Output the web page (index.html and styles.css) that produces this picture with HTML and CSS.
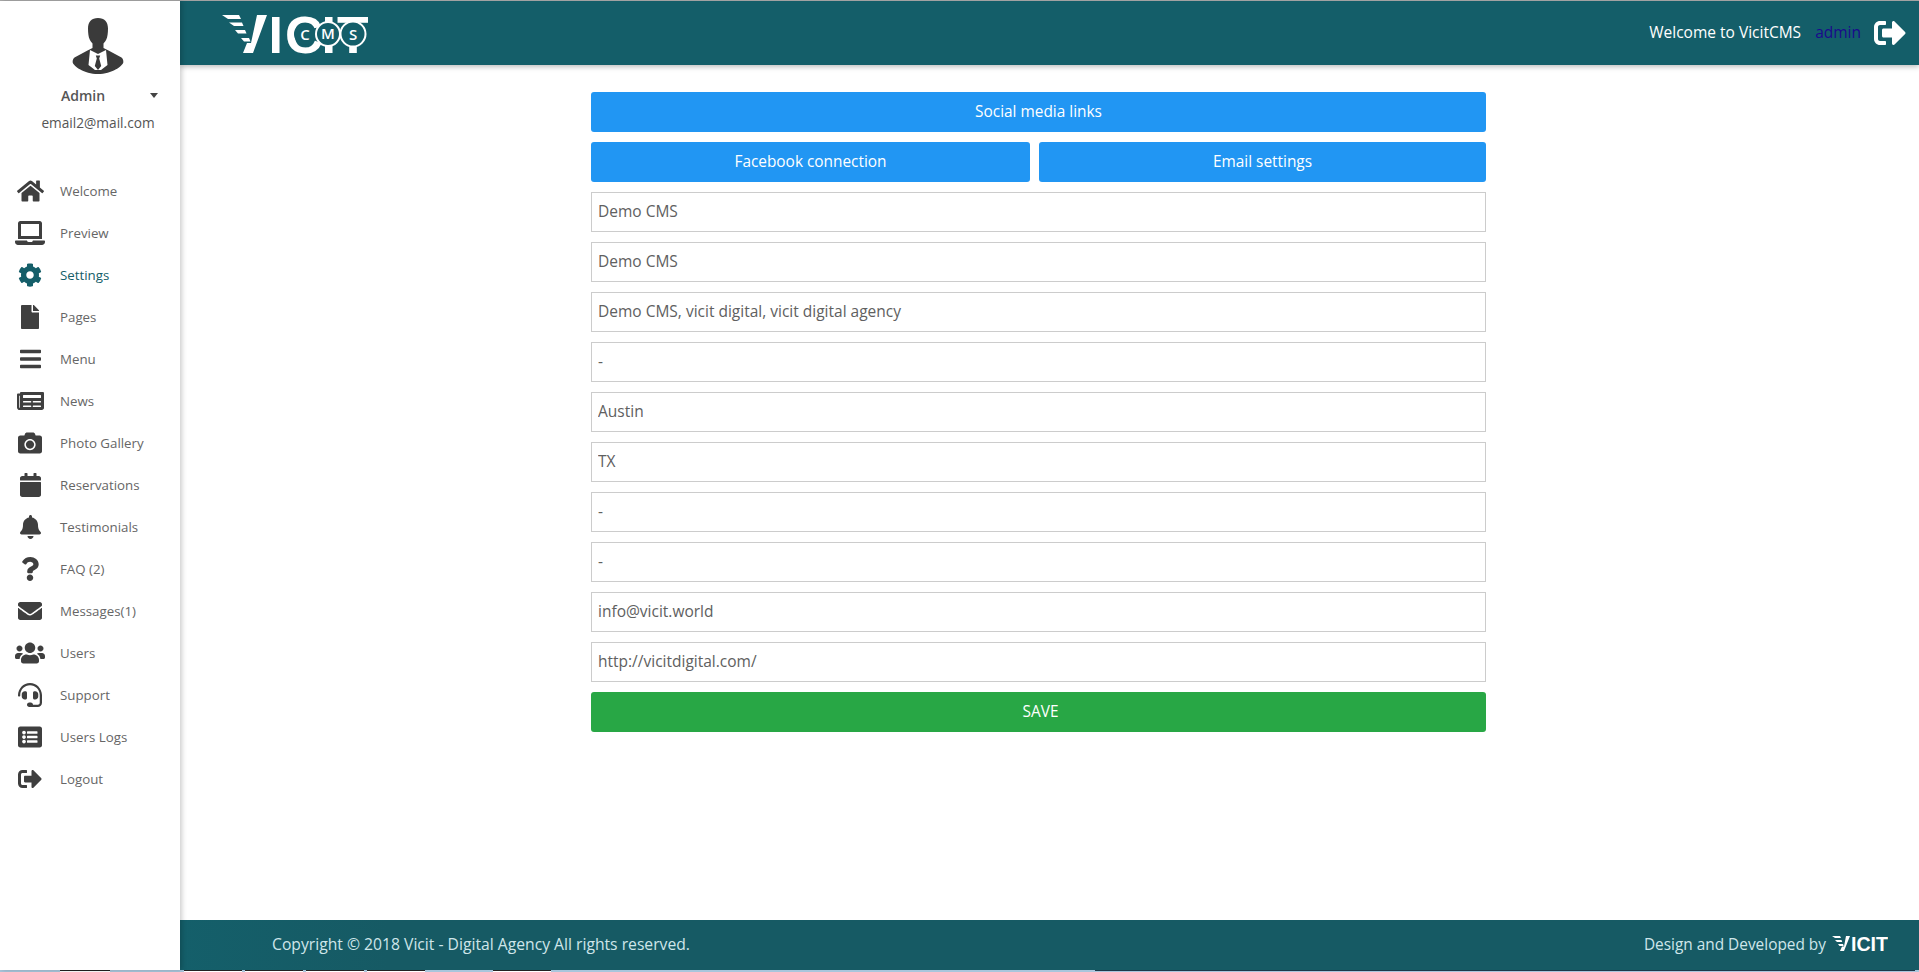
FILE: index.html
```html
<!DOCTYPE html>
<html lang="en">
<head>
  <meta charset="UTF-8">
  <title>VicitCMS - Settings</title>
  <link rel="stylesheet" href="styles.css">
</head>
<body>
  <div class="page">
    <aside class="sidebar">
      <div class="profile">
        <svg class="avatar" viewBox="0 0 52 56">
          <path d="M26 0c-6.500 0-10 4-10 10.500 0 4.500.6 8.500 1.500 10.500.6 1.600 2 3.500 3 4.500v4.500l-5 2.500-13 7c-1.500 1-2 3-1.800 5C1.500 48 12 56 26 56s24.500-8 25.300-11.500c.2-2-.3-4-1.800-5l-13-7-5-2.500v-4.500c1-1 2.400-2.900 3-4.500.9-2 1.500-6 1.500-10.500C36 4 32.500 0 26 0z"/>
          <path class="avatar-shirt" d="M18 32l8 4 8-4 1.500 15-6.500 5h-6l-6.500-5z"/>
          <path d="M23.800 37.500h4.400l-1 3 2 7.500-3.200 4-3.200-4 2-7.500z"/>
        </svg>
        <div class="profile-name">
          <span>Admin</span>
          <i class="caret"></i>
        </div>
        <div class="profile-mail">email2@mail.com</div>
      </div>
      <nav class="side-nav">
        <a class="nav-item" href="#">
          <span class="nav-icon"><svg width="27" height="24" viewBox="0 0 576 512"><path d="M280.37 148.26L96 300.11V464a16 16 0 0 0 16 16l112.06-.29a16 16 0 0 0 15.92-16V368a16 16 0 0 1 16-16h64a16 16 0 0 1 16 16v95.64a16 16 0 0 0 16 16.05L464 480a16 16 0 0 0 16-16V300L295.67 148.26a12.19 12.19 0 0 0-15.3 0zM571.6 251.47L488 182.56V44.05a12 12 0 0 0-12-12h-56a12 12 0 0 0-12 12v72.61L318.47 43a48 48 0 0 0-61 0L4.34 251.47a12 12 0 0 0-1.6 16.9l25.5 31A12 12 0 0 0 45.15 301l235.22-193.74a12.19 12.19 0 0 1 15.3 0L530.9 301a12 12 0 0 0 16.9-1.6l25.5-31a12 12 0 0 0-1.7-16.93z"/></svg></span>
          Welcome
        </a>
        <a class="nav-item" href="#">
          <span class="nav-icon"><svg width="30" height="24" viewBox="0 0 640 512"><path d="M624 416H381.54c-.74 19.81-14.71 32-32.74 32H288c-18.69 0-33.02-17.47-32.77-32H16c-8.8 0-16 7.2-16 16v16c0 35.2 28.8 64 64 64h512c35.2 0 64-28.8 64-64v-16c0-8.8-7.2-16-16-16zM576 48c0-26.400-21.600-48-48-48H112C85.600 0 64 21.600 64 48v336h512V48zm-64 272H128V64h384v256z"/></svg></span>
          Preview
        </a>
        <a class="nav-item active" href="#">
          <span class="nav-icon"><svg width="24" height="24" viewBox="0 0 512 512"><path d="M487.4 315.7l-42.6-24.6c4.3-23.2 4.3-47 0-70.2l42.6-24.6c4.9-2.8 7.1-8.6 5.5-14-11.1-35.6-30-67.8-54.7-94.6-3.8-4.1-10-5.1-14.8-2.3L380.8 110c-17.9-15.4-38.5-27.3-60.8-35.1V25.8c0-5.6-3.9-10.5-9.4-11.7-36.7-8.2-74.3-7.8-109.2 0-5.5 1.2-9.4 6.1-9.4 11.7V75c-22.2 7.9-42.8 19.8-60.8 35.1L88.7 85.5c-4.9-2.8-11-1.9-14.8 2.3-24.7 26.7-43.6 58.9-54.7 94.6-1.7 5.4.6 11.2 5.5 14L67.3 221c-4.3 23.2-4.3 47 0 70.2l-42.6 24.6c-4.9 2.8-7.1 8.6-5.5 14 11.1 35.6 30 67.8 54.7 94.6 3.8 4.1 10 5.1 14.8 2.3l42.6-24.6c17.9 15.4 38.5 27.3 60.8 35.1v49.2c0 5.6 3.9 10.5 9.4 11.7 36.7 8.2 74.3 7.8 109.2 0 5.5-1.2 9.4-6.1 9.4-11.7v-49.2c22.2-7.9 42.8-19.8 60.8-35.1l42.6 24.6c4.9 2.8 11 1.9 14.8-2.3 24.7-26.7 43.6-58.9 54.7-94.6 1.5-5.5-.7-11.3-5.6-14.1zM256 336c-44.1 0-80-35.9-80-80s35.9-80 80-80 80 35.9 80 80-35.9 80-80 80z"/></svg></span>
          Settings
        </a>
        <a class="nav-item" href="#">
          <span class="nav-icon"><svg width="18" height="24" viewBox="0 0 384 512"><path d="M224 136V0H24C10.700 0 0 10.700 0 24v464c0 13.300 10.700 24 24 24h336c13.300 0 24-10.700 24-24V160H248c-13.200 0-24-10.800-24-24zm160-14.100v6.100H256V0h6.100c6.400 0 12.500 2.500 17 7l97.900 98c4.500 4.500 7 10.600 7 16.900z"/></svg></span>
          Pages
        </a>
        <a class="nav-item" href="#">
          <span class="nav-icon"><svg width="21" height="24" viewBox="0 0 448 512"><path d="M16 132h416c8.837 0 16-7.163 16-16V76c0-8.837-7.163-16-16-16H16C7.163 60 0 67.163 0 76v40c0 8.837 7.163 16 16 16zm0 160h416c8.837 0 16-7.163 16-16v-40c0-8.837-7.163-16-16-16H16c-8.837 0-16 7.163-16 16v40c0 8.837 7.163 16 16 16zm0 160h416c8.837 0 16-7.163 16-16v-40c0-8.837-7.163-16-16-16H16c-8.837 0-16 7.163-16 16v40c0 8.837 7.163 16 16 16z"/></svg></span>
          Menu
        </a>
        <a class="nav-item" href="#">
          <span class="nav-icon"><svg width="27" height="24" viewBox="0 0 576 512"><path d="M552 64H88c-13.255 0-24 10.745-24 24v8H24c-13.255 0-24 10.745-24 24v272c0 30.928 25.072 56 56 56h472c26.510 0 48-21.490 48-48V88c0-13.255-10.745-24-24-24zM56 400a8 8 0 0 1-8-8V144h16v248a8 8 0 0 1-8 8zm236-16H140c-6.627 0-12-5.373-12-12v-8c0-6.627 5.373-12 12-12h152c6.627 0 12 5.373 12 12v8c0 6.627-5.373 12-12 12zm208 0H348c-6.627 0-12-5.373-12-12v-8c0-6.627 5.373-12 12-12h152c6.627 0 12 5.373 12 12v8c0 6.627-5.373 12-12 12zm-208-96H140c-6.627 0-12-5.373-12-12v-8c0-6.627 5.373-12 12-12h152c6.627 0 12 5.373 12 12v8c0 6.627-5.373 12-12 12zm208 0H348c-6.627 0-12-5.373-12-12v-8c0-6.627 5.373-12 12-12h152c6.627 0 12 5.373 12 12v8c0 6.627-5.373 12-12 12zm0-96H140c-6.627 0-12-5.373-12-12v-40c0-6.627 5.373-12 12-12h360c6.627 0 12 5.373 12 12v40c0 6.627-5.373 12-12 12z"/></svg></span>
          News
        </a>
        <a class="nav-item" href="#">
          <span class="nav-icon"><svg width="24" height="24" viewBox="0 0 512 512"><path d="M512 144v288c0 26.500-21.500 48-48 48H48c-26.500 0-48-21.500-48-48V144c0-26.500 21.500-48 48-48h88l12.300-32.900c7-18.700 24.900-31.100 44.900-31.100h125.500c20 0 37.900 12.400 44.900 31.100L376 96h88c26.500 0 48 21.500 48 48zM376 288c0-66.200-53.800-120-120-120s-120 53.800-120 120 53.800 120 120 120 120-53.800 120-120zm-32 0c0 48.500-39.500 88-88 88s-88-39.500-88-88 39.500-88 88-88 88 39.500 88 88z"/></svg></span>
          Photo Gallery
        </a>
        <a class="nav-item" href="#">
          <span class="nav-icon"><svg width="21" height="24" viewBox="0 0 448 512"><path d="M12 192h424c6.600 0 12 5.400 12 12v260c0 26.500-21.500 48-48 48H48c-26.500 0-48-21.500-48-48V204c0-6.600 5.400-12 12-12zm436-44v-36c0-26.500-21.500-48-48-48h-48V12c0-6.600-5.400-12-12-12h-40c-6.600 0-12 5.400-12 12v52H160V12c0-6.600-5.400-12-12-12h-40c-6.600 0-12 5.400-12 12v52H48C21.500 64 0 85.500 0 112v36c0 6.600 5.400 12 12 12h424c6.600 0 12-5.400 12-12z"/></svg></span>
          Reservations
        </a>
        <a class="nav-item" href="#">
          <span class="nav-icon"><svg width="21" height="24" viewBox="0 0 448 512"><path d="M224 512c35.320 0 63.970-28.650 63.970-64H160.030c0 35.350 28.650 64 63.970 64zm215.390-149.710c-19.320-20.760-55.470-51.990-55.470-154.290 0-77.700-54.480-139.900-127.940-155.160V32c0-17.670-14.320-32-31.980-32s-31.980 14.330-31.980 32v20.840C118.560 68.100 64.080 130.300 64.080 208c0 102.300-36.150 133.530-55.470 154.290-6 6.450-8.660 14.160-8.610 21.710.11 16.400 12.980 32 32.100 32h383.800c19.120 0 32-15.600 32.100-32 .05-7.550-2.610-15.270-8.610-21.710z"/></svg></span>
          Testimonials
        </a>
        <a class="nav-item" href="#">
          <span class="nav-icon"><svg width="18" height="24" viewBox="0 0 384 512"><path d="M202.021 0C122.202 0 70.503 32.703 29.914 91.026c-7.363 10.580-5.093 25.086 5.178 32.874l43.138 32.709c10.373 7.865 25.132 6.026 33.253-4.148 25.049-31.381 43.630-49.449 82.757-49.449 30.764 0 68.816 19.799 68.816 49.631 0 22.552-18.617 34.134-48.993 51.164-35.423 19.860-82.299 44.576-82.299 106.405V320c0 13.255 10.745 24 24 24h72.471c13.255 0 24-10.745 24-24v-5.773c0-42.860 125.268-44.645 125.268-160.627C377.504 66.256 286.902 0 202.021 0zM192 373.459c-38.196 0-69.271 31.075-69.271 69.271 0 38.195 31.075 69.270 69.271 69.270s69.271-31.075 69.271-69.271-31.075-69.270-69.271-69.270z"/></svg></span>
          FAQ (2)
        </a>
        <a class="nav-item" href="#">
          <span class="nav-icon"><svg width="24" height="24" viewBox="0 0 512 512"><path d="M502.300 190.800c3.900-3.100 9.700-.2 9.700 4.700V400c0 26.500-21.500 48-48 48H48c-26.500 0-48-21.500-48-48V195.600c0-5 5.700-7.800 9.700-4.700 22.400 17.400 52.100 39.500 154.100 113.600 21.100 15.400 56.700 47.800 92.200 47.600 35.700.3 72-32.800 92.300-47.600 102-74.100 131.600-96.300 154-113.700zM256 320c23.200.4 56.600-29.200 73.400-41.400 132.700-96.300 142.800-104.700 173.400-128.700 5.800-4.500 9.200-11.500 9.200-18.900v-19c0-26.500-21.500-48-48-48H48C21.500 64 0 85.500 0 112v19c0 7.400 3.400 14.300 9.200 18.900 30.600 23.900 40.700 32.400 173.400 128.700 16.800 12.200 50.200 41.800 73.400 41.400z"/></svg></span>
          Messages(1)
        </a>
        <a class="nav-item" href="#">
          <span class="nav-icon"><svg width="30" height="24" viewBox="0 0 640 512"><path d="M96 224c35.300 0 64-28.700 64-64s-28.700-64-64-64-64 28.700-64 64 28.700 64 64 64zm448 0c35.300 0 64-28.700 64-64s-28.700-64-64-64-64 28.700-64 64 28.700 64 64 64zm32 32h-64c-17.600 0-33.500 7.100-45.100 18.600 40.300 22.100 68.900 62 75.100 109.400h66c17.700 0 32-14.300 32-32v-32c0-35.300-28.700-64-64-64zm-256 0c61.900 0 112-50.100 112-112S381.900 32 320 32 208 82.100 208 144s50.100 112 112 112zm76.800 32h-8.300c-20.800 10-43.900 16-68.500 16s-47.600-6-68.500-16h-8.300C179.600 288 128 339.600 128 403.200V432c0 26.500 21.500 48 48 48h288c26.500 0 48-21.500 48-48v-28.800c0-63.600-51.600-115.200-115.200-115.200zm-223.700-13.400C161.500 263.100 145.600 256 128 256H64c-35.300 0-64 28.700-64 64v32c0 17.700 14.300 32 32 32h65.900c6.300-47.400 34.900-87.300 75.200-109.400z"/></svg></span>
          Users
        </a>
        <a class="nav-item" href="#">
          <span class="nav-icon"><svg width="24" height="24" viewBox="0 0 512 512"><path d="M192 208c0-17.670-14.330-32-32-32h-16c-35.350 0-64 28.650-64 64v48c0 35.350 28.650 64 64 64h16c17.670 0 32-14.330 32-32V208zm176 144c35.350 0 64-28.650 64-64v-48c0-35.350-28.650-64-64-64h-16c-17.670 0-32 14.330-32 32v112c0 17.670 14.330 32 32 32h16zM256 0C113.180 0 4.580 118.830 0 256v16c0 8.840 7.160 16 16 16h16c8.840 0 16-7.160 16-16v-16c0-114.690 93.310-208 208-208s208 93.310 208 208h-.12c.08 2.430.12 165.720.12 165.720 0 23.350-18.930 42.280-42.280 42.280H320c0-26.510-21.490-48-48-48h-32c-26.510 0-48 21.490-48 48s21.490 48 48 48h181.720c49.860 0 90.280-40.420 90.280-90.280V256C507.420 118.830 398.820 0 256 0z"/></svg></span>
          Support
        </a>
        <a class="nav-item" href="#">
          <span class="nav-icon"><svg width="24" height="24" viewBox="0 0 512 512"><path d="M464 480H48c-26.510 0-48-21.490-48-48V80c0-26.510 21.490-48 48-48h416c26.510 0 48 21.490 48 48v352c0 26.510-21.490 48-48 48zM128 120c-22.091 0-40 17.909-40 40s17.909 40 40 40 40-17.909 40-40-17.909-40-40-40zm0 96c-22.091 0-40 17.909-40 40s17.909 40 40 40 40-17.909 40-40-17.909-40-40-40zm0 96c-22.091 0-40 17.909-40 40s17.909 40 40 40 40-17.909 40-40-17.909-40-40-40zm288-136v-32c0-6.627-5.373-12-12-12H204c-6.627 0-12 5.373-12 12v32c0 6.627 5.373 12 12 12h200c6.627 0 12-5.373 12-12zm0 96v-32c0-6.627-5.373-12-12-12H204c-6.627 0-12 5.373-12 12v32c0 6.627 5.373 12 12 12h200c6.627 0 12-5.373 12-12zm0 96v-32c0-6.627-5.373-12-12-12H204c-6.627 0-12 5.373-12 12v32c0 6.627 5.373 12 12 12h200c6.627 0 12-5.373 12-12z"/></svg></span>
          Users Logs
        </a>
        <a class="nav-item" href="#">
          <span class="nav-icon"><svg width="24" height="24" viewBox="0 0 512 512"><path d="M497 273L329 441c-15 15-41 4.500-41-17v-96H152c-13.300 0-24-10.700-24-24v-96c0-13.300 10.700-24 24-24h136V88c0-21.400 25.900-32 41-17l168 168c9.300 9.400 9.300 24.600 0 34zM192 436v-40c0-6.600-5.400-12-12-12H96c-17.700 0-32-14.300-32-32V160c0-17.700 14.300-32 32-32h84c6.600 0 12-5.400 12-12V76c0-6.600-5.400-12-12-12H96c-53 0-96 43-96 96v192c0 53 43 96 96 96h84c6.600 0 12-5.400 12-12z"/></svg></span>
          Logout
        </a>
      </nav>
    </aside>

    <div class="main">
      <header class="topbar">
        <svg class="logo" viewBox="0 -14 146 64">
          <polygon points="0,0 17,0 19,4 6,4"/>
          <polygon points="7,7.500 20,7.500 21.500,11 12,11"/>
          <polygon points="13,15 23,15 24.500,18.500 16,18.500"/>
          <polygon points="19,23 27,23 28.500,26.500 22,26.500"/>
          <polygon points="35,0 45,0 31,38 21,38 25,28 29,28"/>
          <text x="46.500" y="38" class="logo-big">I</text>
          <text x="63" y="38" class="logo-big" textLength="38" lengthAdjust="spacingAndGlyphs">C</text>
          <text x="99.500" y="38" class="logo-big">I</text>
          <text x="115" y="38" class="logo-big" textLength="32" lengthAdjust="spacingAndGlyphs">T</text>
          <circle cx="83" cy="19" r="11" class="logo-hole"/>
          <text x="83" y="24.500" class="logo-small">C</text>
          <circle cx="106" cy="19" r="12" class="logo-ring"/>
          <text x="106" y="24" class="logo-small">M</text>
          <circle cx="131" cy="19" r="12.500" class="logo-ring"/>
          <text x="131" y="24.500" class="logo-small">S</text>
        </svg>
        <div class="topbar-right">
          <span class="welcome">Welcome to VicitCMS</span>
          <a class="user-link" href="#">admin</a>
          <svg class="logout-icon" width="32" height="32" viewBox="0 0 512 512"><path d="M497 273L329 441c-15 15-41 4.500-41-17v-96H152c-13.300 0-24-10.700-24-24v-96c0-13.300 10.700-24 24-24h136V88c0-21.400 25.900-32 41-17l168 168c9.300 9.400 9.300 24.600 0 34zM192 436v-40c0-6.600-5.400-12-12-12H96c-17.700 0-32-14.300-32-32V160c0-17.700 14.300-32 32-32h84c6.600 0 12-5.400 12-12V76c0-6.600-5.400-12-12-12H96c-53 0-96 43-96 96v192c0 53 43 96 96 96h84c6.600 0 12-5.400 12-12z"/></svg>
        </div>
      </header>

      <main class="content">
        <form class="settings-form">
          <a class="btn btn-blue" href="#">Social media links</a>
          <div class="btn-row">
            <a class="btn btn-blue" href="#">Facebook connection</a>
            <a class="btn btn-blue" href="#">Email settings</a>
          </div>
          <input class="field" type="text" value="Demo CMS">
          <input class="field" type="text" value="Demo CMS">
          <input class="field" type="text" value="Demo CMS, vicit digital, vicit digital agency">
          <input class="field" type="text" value="-">
          <input class="field" type="text" value="Austin">
          <input class="field" type="text" value="TX">
          <input class="field" type="text" value="-">
          <input class="field" type="text" value="-">
          <input class="field" type="text" value="info@vicit.world">
          <input class="field" type="text" value="http://vicitdigital.com/">
          <button class="btn btn-green" type="button">SAVE</button>
        </form>
      </main>

      <footer class="footer">
        <span class="copyright">Copyright © 2018 Vicit - Digital Agency All rights reserved.</span>
        <span class="credit">
          Design and Developed by
          <svg class="logo-mini" viewBox="0 -6 56 28">
            <polygon points="0,0 8,0 9,2 3,2"/>
            <polygon points="3,4 9.500,4 10.200,6 5,6"/>
            <polygon points="6,8 11,8 11.700,10 7.500,10"/>
            <polygon points="14,0 18,0 12,15 8,15 10,10.500 12,10.500"/>
            <text x="19" y="15" class="logo-mini-text" textLength="37" lengthAdjust="spacingAndGlyphs">ICIT</text>
          </svg>
        </span>
      </footer>
    </div>
  </div>

  <div class="taskbar">
    <i class="task task-first"></i>
    <i class="task"></i>
    <i class="task"></i>
    <i class="task"></i>
    <i class="task task-gap"></i>
    <i class="task task-last"></i>
    <i class="task-wide"></i>
  </div>
</body>
</html>
```

FILE: styles.css
```css
html, body {
  margin: 0;
  padding: 0;
  height: 100%;
  overflow: hidden;
  background: #fff;
  font-family: "Open Sans", "Noto Sans", sans-serif;
}
* {
  box-sizing: border-box;
}
.page {
  display: flex;
  height: 970px;
  border-top: 1px solid #aaa;
}
.sidebar {
  width: 180px;
  flex-shrink: 0;
  background: #fff;
  box-shadow: 2px 0 5px rgba(0, 0, 0, 0.2);
  position: relative;
  z-index: 2;
  color: #3d3d3d;
}
.profile {
  display: flex;
  flex-direction: column;
  align-items: center;
  padding-top: 17px;
}
.avatar {
  width: 52px;
  height: 56px;
  margin-left: 16px;
  fill: #3a3a3a;
}
.avatar-shirt {
  fill: #fff;
}
.profile-name {
  display: flex;
  justify-content: center;
  width: 100%;
  margin-top: 12px;
  padding-right: 14px;
  font-size: 14px;
  font-weight: 600;
  color: #555;
  position: relative;
}
.caret {
  position: absolute;
  left: 150px;
  top: 7px;
  border: 4.500px solid transparent;
  border-top: 5px solid #444;
  border-bottom: 0;
}
.profile-mail {
  margin: 8px 0 0 16px;
  font-size: 13.700px;
  color: #555;
}
.side-nav {
  display: flex;
  flex-direction: column;
  margin-top: 38px;
}
.nav-item {
  display: flex;
  align-items: center;
  height: 42px;
  font-size: 13.300px;
  color: #666;
  text-decoration: none;
}
.nav-icon {
  display: flex;
  justify-content: center;
  align-items: center;
  width: 30px;
  margin: 0 15px;
  fill: #3f3f3f;
}
.nav-item.active {
  color: #145e69;
}
.nav-item.active .nav-icon {
  fill: #145e69;
}
.main {
  flex: 1;
  display: flex;
  flex-direction: column;
  min-width: 0;
}
.topbar {
  display: flex;
  justify-content: space-between;
  align-items: center;
  height: 64px;
  padding: 0 13px 0 42px;
  background: #145e69;
  box-shadow: 0 2px 5px rgba(0, 0, 0, 0.25);
  color: #fff;
}
.logo {
  width: 146px;
  height: 64px;
  fill: #fff;
}
.logo-big {
  font-family: "Liberation Sans", sans-serif;
  font-weight: 700;
  font-size: 52px;
}
.logo-small {
  font-family: "Open Sans", sans-serif;
  font-weight: 600;
  font-size: 15px;
  text-anchor: middle;
}
.logo-hole {
  fill: #145e69;
}
.logo-ring {
  fill: #145e69;
  stroke: #fff;
  stroke-width: 2;
}
.topbar-right {
  display: flex;
  align-items: center;
}
.welcome {
  padding-bottom: 2px;
  font-size: 15.500px;
}
.user-link {
  margin-left: 14px;
  padding-bottom: 2px;
  font-size: 15.500px;
  color: #1a0a8c;
  text-decoration: none;
}
.logout-icon {
  margin-left: 13px;
  fill: #fff;
}
.content {
  flex: 1;
  display: flex;
  justify-content: center;
  padding: 27px 22px 0 0;
}
.settings-form {
  display: flex;
  flex-direction: column;
  gap: 10px;
  width: 895px;
}
.btn {
  display: flex;
  align-items: center;
  justify-content: center;
  height: 40px;
  padding: 0 0 2px;
  border: 0;
  border-radius: 3px;
  color: #fff;
  font-family: inherit;
  font-size: 15.400px;
  text-decoration: none;
}
.btn-blue {
  background: #2196f3;
}
.btn-green {
  padding-left: 4px;
  background: #28a745;
}
.btn-row {
  display: flex;
  gap: 9px;
}
.btn-row .btn:first-child {
  width: 439px;
}
.btn-row .btn:last-child {
  flex: 1;
}
.field {
  display: block;
  width: 100%;
  height: 40px;
  padding: 0 6px 2px;
  border: 1px solid #ccc;
  background: #fff;
  color: #606060;
  font-family: inherit;
  font-size: 15.500px;
}
.footer {
  display: flex;
  justify-content: space-between;
  align-items: center;
  height: 50px;
  padding: 0 31px 0 92px;
  background: linear-gradient(90deg, #145f6a, #165a64 12%);
  color: #cfe6ea;
}
.copyright {
  padding-bottom: 2px;
  font-size: 15.700px;
}
.credit {
  display: flex;
  align-items: center;
  gap: 6px;
  padding-bottom: 2px;
  font-size: 15.400px;
}
.logo-mini {
  width: 56px;
  height: 28px;
  fill: #fff;
}
.logo-mini-text {
  font-family: "Liberation Sans", sans-serif;
  font-weight: 700;
  font-size: 21px;
}
.taskbar {
  display: flex;
  height: 2px;
  background: #a9c6dc;
}
.task {
  width: 58px;
  margin-right: 3px;
  border-top: 1px solid #222;
  background: #fff;
}
.task-first {
  width: 50px;
  margin: 0 74px 0 60px;
}
.task-gap {
  margin-right: 68px;
}
.task-last {
  margin-right: 544px;
}
.task-wide {
  flex: 1;
  margin-right: 4px;
  border-top: 1px solid #1d3a4a;
}
```
